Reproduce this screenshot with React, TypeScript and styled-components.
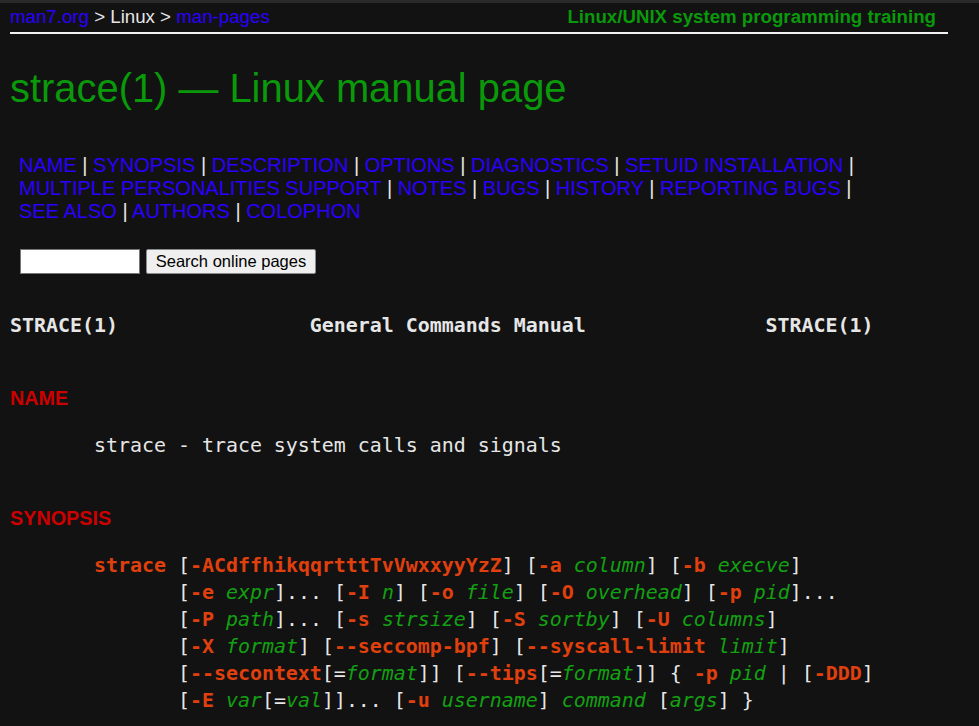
import React from "react";
import styled, { createGlobalStyle } from "styled-components";

const GlobalStyle = createGlobalStyle`
  html, body {
    margin: 0;
    padding: 0;
    background: #121212;
  }
  body {
    color: #e6e6e6;
    font-family: "Liberation Sans", Arial, sans-serif;
  }
`;

const TopStrip = styled.div`
  height: 3px;
  background: #2a2a2a;
`;

const Page = styled.div`
  padding: 0 31px 0 10px;
`;

const HeaderBar = styled.div`
  display: flex;
  justify-content: space-between;
  align-items: center;
  margin-top: 3px;
  padding-right: 12px;
  font-size: 18.7px;
  line-height: 22px;
`;

const Crumbs = styled.div`
  color: #e6e6e6;
`;

const Link = styled.a`
  color: #2a00ff;
  text-decoration: none;
`;

const Training = styled.a`
  color: #0a990a;
  font-weight: bold;
  text-decoration: none;
`;

const Rule = styled.div`
  margin-top: 4px;
  height: 2px;
  background: #f2f2f2;
`;

const Title = styled.h1`
  margin: 31px 0 0;
  font-size: 39.9px;
  line-height: 46px;
  font-weight: normal;
  color: #0a990a;
`;

const Nav = styled.nav`
  margin-top: 43px;
  padding-left: 9px;
  font-size: 20px;
  line-height: 23px;
`;

const Sep = styled.span`
  color: #e6e6e6;
`;

const SearchForm = styled.form`
  display: flex;
  gap: 6px;
  margin-top: 26px;
  padding-left: 10px;
  height: 25px;
`;

const SearchInput = styled.input`
  box-sizing: border-box;
  width: 120px;
  height: 25px;
  border: 1px solid #767676;
  background: #ffffff;
  padding: 0 4px;
`;

const SearchButton = styled.button`
  box-sizing: border-box;
  width: 170px;
  height: 25px;
  padding: 0;
  border: 1px solid #8a8a8a;
  border-radius: 2px;
  background: #efefef;
  color: #000;
  font-family: "Liberation Sans", Arial, sans-serif;
  font-size: 16.5px;
`;

const Mono = styled.pre<{ $gap: number }>`
  margin: ${(p) => p.$gap}px 0 0;
  font-family: "DejaVu Sans Mono", monospace;
  font-size: 19.93px;
  line-height: 27px;
  color: #e6e6e6;
`;

const HeadLine = styled.span`
  font-weight: bold;
`;

const SectionHead = styled.h2`
  margin: 48px 0 0;
  font-size: 19.8px;
  line-height: 23px;
  font-weight: bold;
  color: #cc0000;
`;

const B = styled.b`
  color: #e0400e;
  font-weight: bold;
`;

const I = styled.i`
  color: #13a013;
  font-style: italic;
`;

// each inner array is one line of the section index
const navRows = [
  ["NAME", "SYNOPSIS", "DESCRIPTION", "OPTIONS", "DIAGNOSTICS", "SETUID INSTALLATION"],
  ["MULTIPLE PERSONALITIES SUPPORT", "NOTES", "BUGS", "HISTORY", "REPORTING BUGS"],
  ["SEE ALSO", "AUTHORS", "COLOPHON"],
];

const pad = "              ";

export default function App() {
  return (
    <>
      <GlobalStyle />
      <TopStrip />
      <Page>
        <HeaderBar>
          <Crumbs>
            <Link href="#">man7.org</Link> &gt; Linux &gt;{" "}
            <Link href="#">man-pages</Link>
          </Crumbs>
          <Training href="#">Linux/UNIX system programming training</Training>
        </HeaderBar>
        <Rule />
        <Title>strace(1) — Linux manual page</Title>
        <Nav>
          {navRows.map((row, r) => (
            <div key={r}>
              {row.map((item, i) => (
                <React.Fragment key={item}>
                  <Link href={"#" + item}>{item}</Link>
                  {(i < row.length - 1 || r < navRows.length - 1) && <Sep> | </Sep>}
                </React.Fragment>
              ))}
            </div>
          ))}
        </Nav>
        <SearchForm onSubmit={(e) => e.preventDefault()}>
          <SearchInput type="text" />
          <SearchButton type="submit">Search online pages</SearchButton>
        </SearchForm>
        <Mono $gap={38}>
          <HeadLine>
            {"STRACE(1)                General Commands Manual               STRACE(1)"}
          </HeadLine>
        </Mono>

        <SectionHead>NAME</SectionHead>
        <Mono $gap={22}>{"       strace - trace system calls and signals"}</Mono>

        <SectionHead>SYNOPSIS</SectionHead>
        <Mono $gap={22}>
          {"       "}<B>strace</B> [<B>-ACdffhikqqrtttTvVwxxyyYzZ</B>] [<B>-a</B> <I>column</I>] [<B>-b</B> <I>execve</I>]
          {"\n" + pad}[<B>-e</B> <I>expr</I>]... [<B>-I</B> <I>n</I>] [<B>-o</B> <I>file</I>] [<B>-O</B> <I>overhead</I>] [<B>-p</B> <I>pid</I>]...
          {"\n" + pad}[<B>-P</B> <I>path</I>]... [<B>-s</B> <I>strsize</I>] [<B>-S</B> <I>sortby</I>] [<B>-U</B> <I>columns</I>]
          {"\n" + pad}[<B>-X</B> <I>format</I>] [<B>--seccomp-bpf</B>] [<B>--syscall-limit</B> <I>limit</I>]
          {"\n" + pad}[<B>--secontext</B>[=<I>format</I>]] [<B>--tips</B>[=<I>format</I>]] {"{"} <B>-p</B> <I>pid</I> | [<B>-DDD</B>]
          {"\n" + pad}[<B>-E</B> <I>var</I>[=<I>val</I>]]... [<B>-u</B> <I>username</I>] <I>command</I> [<I>args</I>] {"}"}
        </Mono>
      </Page>
    </>
  );
}
